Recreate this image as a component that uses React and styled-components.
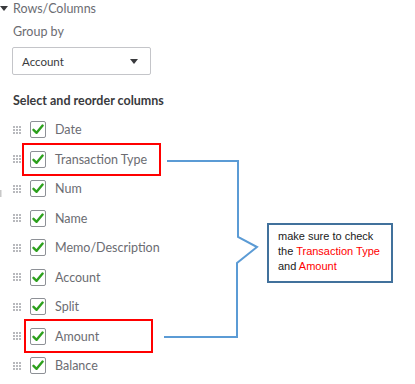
import React from 'react'
import styled, { createGlobalStyle } from 'styled-components'

const GlobalStyle = createGlobalStyle`
  html, body {
    margin: 0;
    padding: 0;
    background: #fff;
  }
  body {
    font-family: Lato, "Open Sans", sans-serif;
  }
`;

const Page = styled.div`
  position: relative;
  width: 415px;
  height: 384px;
  overflow: hidden;
  background: #fff;
`;

const Panel = styled.div`
  display: flex;
  flex-direction: column;
  width: 200px;
`;

const Header = styled.div`
  display: flex;
  align-items: center;
  height: 16px;
  font-size: 12.5px;
  color: #6b6c72;
`;

const Caret = styled.span`
  width: 13px;
  display: flex;
  align-items: center;
  &::before {
    content: '';
    border-left: 4px solid transparent;
    border-right: 4px solid transparent;
    border-top: 5px solid #393a3d;
  }
`;

const Label = styled.div`
  height: 16px;
  line-height: 16px;
  margin: 8px 0 0 13px;
  font-size: 12.5px;
  color: #6b6c72;
`;

const Select = styled.div`
  display: flex;
  align-items: center;
  justify-content: space-between;
  box-sizing: border-box;
  width: 139px;
  height: 28px;
  margin: 7px 0 0 12px;
  padding: 0 12px 0 9px;
  border: 1px solid #c4c5c9;
  border-radius: 2px;
  font-size: 11.5px;
  color: #393a3d;
  &::after {
    content: '';
    border-left: 4px solid transparent;
    border-right: 4px solid transparent;
    border-top: 5px solid #393a3d;
  }
`;

const Title = styled.div`
  height: 16px;
  line-height: 16px;
  margin: 18px 0 0 13px;
  font-size: 12.5px;
  font-weight: 700;
  color: #393a3d;
`;

const List = styled.div`
  display: flex;
  flex-direction: column;
  margin-top: 6px;
`;

const Row = styled.div`
  display: flex;
  align-items: center;
  height: 29.5px;
  padding-left: 13px;
`;

const Handle = styled.span`
  display: grid;
  grid-template-columns: repeat(3, 2px);
  grid-auto-rows: 2px;
  gap: 1px;
  width: 8px;
  margin-right: 9px;
  span {
    background: #b8b9bd;
  }
`;

const Box = styled.span`
  box-sizing: border-box;
  display: flex;
  align-items: center;
  justify-content: center;
  width: 16px;
  height: 17px;
  border: 1px solid #8d9096;
  border-radius: 2px;
  margin-right: 9px;
`;

const RowText = styled.span`
  font-size: 12.5px;
  color: #6b6c72;
  white-space: nowrap;
`;

const Overlay = styled.svg`
  position: absolute;
  left: 0;
  top: 0;
  pointer-events: none;
`;

const Callout = styled.div`
  position: absolute;
  left: 267px;
  top: 223px;
  box-sizing: border-box;
  width: 126px;
  height: 60px;
  border: 2px solid #41719c;
  padding: 4px 0 0 9px;
  font-family: "Liberation Sans", Arial, sans-serif;
  font-size: 11px;
  line-height: 15px;
  color: #1a1a1a;
`;

const Red = styled.span`
  color: #ff0000;
`;

const columns = ['Date', 'Transaction Type', 'Num', 'Name', 'Memo/Description', 'Account', 'Split', 'Amount', 'Balance']

function Check() {
  return (
    <svg width="12" height="11" viewBox="0 0 12 11">
      <path d="M1.5 5.8 L4.6 8.8 L10.6 1.6" fill="none" stroke="#2ca01c" strokeWidth="2.4" strokeLinecap="round" strokeLinejoin="round" />
    </svg>
  )
}

function App() {
  return (
    <Page>
      <GlobalStyle />
      <Panel>
        <Header><Caret />Rows/Columns</Header>
        <Label>Group by</Label>
        <Select>Account</Select>
        <Title>Select and reorder columns</Title>
        <List>
          {columns.map((c) => (
            <Row key={c}>
              <Handle>
                {Array.from({ length: 9 }).map((_, i) => <span key={i} />)}
              </Handle>
              <Box><Check /></Box>
              <RowText>{c}</RowText>
            </Row>
          ))}
        </List>
      </Panel>

      {/* annotation layer: highlight boxes and the bracket */}
      <Overlay width="415" height="384" viewBox="0 0 415 384">
        <rect x="0" y="190" width="1.5" height="7" fill="#c8c8c8" />
        <rect x="23" y="144" width="137" height="31" fill="none" stroke="#ff0000" strokeWidth="2" />
        <rect x="25" y="320" width="127" height="32" fill="none" stroke="#ff0000" strokeWidth="2" />
        <path
          d="M167 161 H238 V237 L257 247 L237 263 V337 H164"
          fill="none"
          stroke="#5b9bd5"
          strokeWidth="2"
        />
      </Overlay>

      <Callout>
        make sure to check<br />
        the <Red>Transaction Type</Red><br />
        and <Red>Amount</Red>
      </Callout>
    </Page>
  )
}

export default App
